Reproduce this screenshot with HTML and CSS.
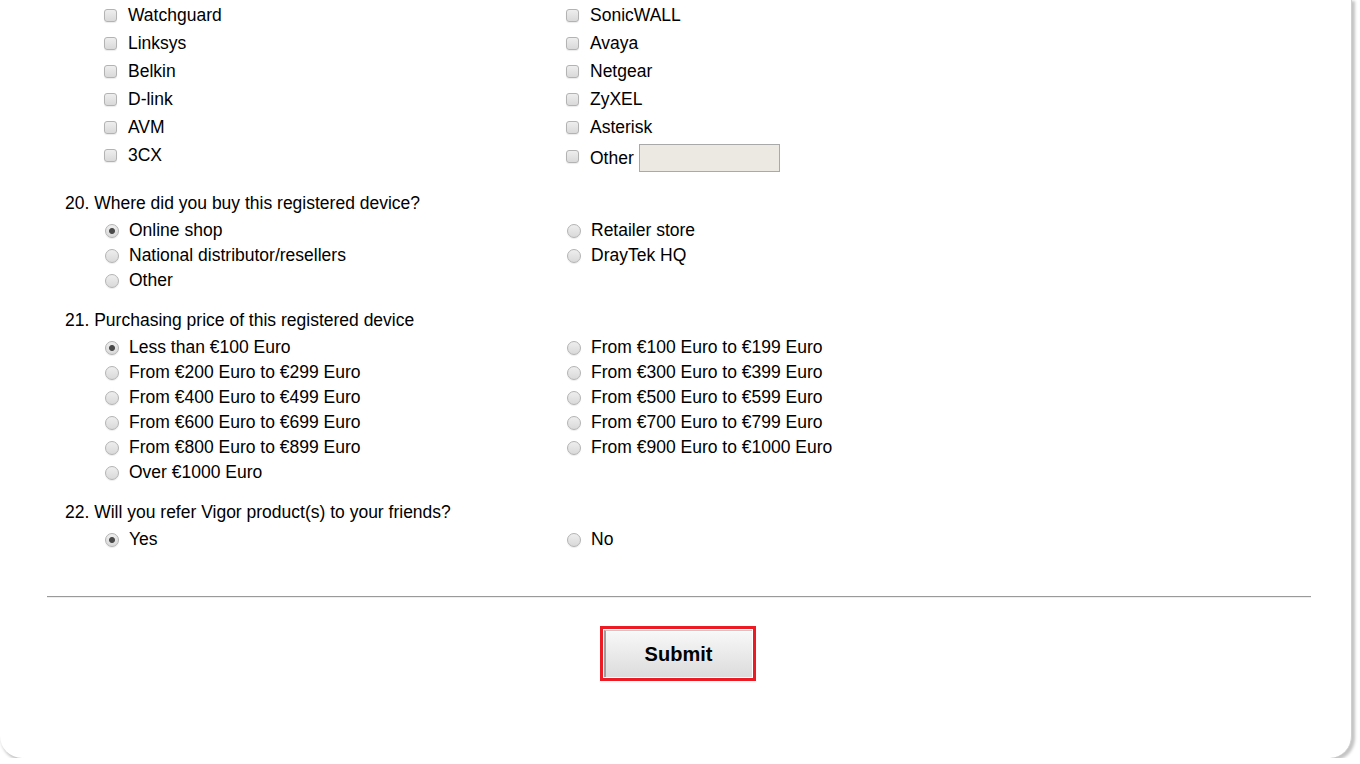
FILE: index.html
```html
<!DOCTYPE html>
<html lang="en">
<head>
    <meta charset="UTF-8">
    <meta name="viewport" content="width=device-width, initial-scale=1.0">
    <title>Product Registration Survey</title>
    <link rel="stylesheet" href="styles.css">
</head>
<body>
    <div class="page">
        <form class="survey" onsubmit="return false">
            <div class="opts checks">
                <label class="opt"><input type="checkbox">Watchguard</label>
                <label class="opt"><input type="checkbox">SonicWALL</label>
                <label class="opt"><input type="checkbox">Linksys</label>
                <label class="opt"><input type="checkbox">Avaya</label>
                <label class="opt"><input type="checkbox">Belkin</label>
                <label class="opt"><input type="checkbox">Netgear</label>
                <label class="opt"><input type="checkbox">D-link</label>
                <label class="opt"><input type="checkbox">ZyXEL</label>
                <label class="opt"><input type="checkbox">AVM</label>
                <label class="opt"><input type="checkbox">Asterisk</label>
                <label class="opt"><input type="checkbox">3CX</label>
                <label class="opt other"><input type="checkbox">Other <input type="text" class="other-text"></label>
            </div>

            <div class="question">
                <p class="q-title">20. Where did you buy this registered device?</p>
                <div class="opts radios">
                    <label class="opt"><input type="radio" name="q20" checked>Online shop</label>
                    <label class="opt"><input type="radio" name="q20">Retailer store</label>
                    <label class="opt"><input type="radio" name="q20">National distributor/resellers</label>
                    <label class="opt"><input type="radio" name="q20">DrayTek HQ</label>
                    <label class="opt"><input type="radio" name="q20">Other</label>
                </div>
            </div>

            <div class="question">
                <p class="q-title">21. Purchasing price of this registered device</p>
                <div class="opts radios">
                    <label class="opt"><input type="radio" name="q21" checked>Less than €100 Euro</label>
                    <label class="opt"><input type="radio" name="q21">From €100 Euro to €199 Euro</label>
                    <label class="opt"><input type="radio" name="q21">From €200 Euro to €299 Euro</label>
                    <label class="opt"><input type="radio" name="q21">From €300 Euro to €399 Euro</label>
                    <label class="opt"><input type="radio" name="q21">From €400 Euro to €499 Euro</label>
                    <label class="opt"><input type="radio" name="q21">From €500 Euro to €599 Euro</label>
                    <label class="opt"><input type="radio" name="q21">From €600 Euro to €699 Euro</label>
                    <label class="opt"><input type="radio" name="q21">From €700 Euro to €799 Euro</label>
                    <label class="opt"><input type="radio" name="q21">From €800 Euro to €899 Euro</label>
                    <label class="opt"><input type="radio" name="q21">From €900 Euro to €1000 Euro</label>
                    <label class="opt"><input type="radio" name="q21">Over €1000 Euro</label>
                </div>
            </div>

            <div class="question">
                <p class="q-title">22. Will you refer Vigor product(s) to your friends?</p>
                <div class="opts radios">
                    <label class="opt"><input type="radio" name="q22" checked>Yes</label>
                    <label class="opt"><input type="radio" name="q22">No</label>
                </div>
            </div>
        </form>

        <hr class="divider">

        <div class="actions">
            <div class="submit-box">
                <button type="button" class="submit">Submit</button>
            </div>
        </div>
    </div>
</body>
</html>
```

FILE: styles.css
```css
body {
    margin: 0;
    background-color: #fff;
    font-family: "Liberation Sans", Arial, sans-serif;
    font-size: 17.5px;
    color: #000;
    overflow: hidden;
}
.page {
    width: 1352px;
    background-color: #fff;
    border-right: 1px solid #cfcfcf;
    border-radius: 0 0 22px 22px;
    box-shadow: 2px 2px 3px 1px #c4c4c4;
    box-sizing: border-box;
}
.survey {
    padding: 1px 0 0 65px;
}
.opts {
    display: grid;
    grid-template-columns: 462px 1fr;
    margin-left: 39px;
}
.opt {
    display: flex;
    align-items: center;
    white-space: nowrap;
}
.checks {
    margin-bottom: 16px;
}
.checks .opt {
    height: 28px;
}
.checks .opt.other {
    height: 34px;
}
.checks .opt.other input[type="checkbox"] {
    margin-top: -3px;
}
.radios .opt {
    height: 25px;
}
.question {
    margin-bottom: 15px;
}
.q-title {
    margin: 0 0 2px 0;
    line-height: 25px;
}

/* old style grey form controls */
input[type="checkbox"],
input[type="radio"] {
    -webkit-appearance: none;
    appearance: none;
    margin: 0;
    background: linear-gradient(#eeeeee, #d9d9d9);
    border: 1px solid #b3b3b3;
    box-shadow: 0 1px 1px rgba(0, 0, 0, 0.08);
    box-sizing: border-box;
}
input[type="checkbox"] {
    width: 13px;
    height: 13px;
    border-radius: 3px;
    margin-right: 11px;
}
input[type="radio"] {
    width: 14px;
    height: 14px;
    border-radius: 50%;
    margin: 1px 10px 0 1px;
}
input[type="radio"]:checked {
    background: radial-gradient(circle, #4a4a4a 0, #4a4a4a 2.5px, transparent 3.5px), linear-gradient(#eeeeee, #d9d9d9);
}
.other-text {
    width: 141px;
    height: 28px;
    margin-left: 5px;
    border: 1px solid #a9a9a9;
    background-color: #ebe9e2;
    box-sizing: border-box;
    font-size: 15px;
}

.divider {
    margin: 44px 40px 0 47px;
    border: 0;
    border-top: 1px solid #9a9a9a;
    border-bottom: 1px solid #eeeeee;
}
.actions {
    display: flex;
    justify-content: center;
    padding: 28px 0 77px 4px;
}
.submit-box {
    border: 3px solid #ed1c24;
    padding: 1px;
    background-color: #fff;
}
.submit {
    display: block;
    width: 148px;
    height: 47px;
    border: 0;
    border-left: 2px solid #9d9d9d;
    border-top: 1px solid #c8c8c8;
    background: linear-gradient(#f8f8f8, #dcdcdc);
    font-family: "Liberation Sans", Arial, sans-serif;
    font-size: 20px;
    font-weight: bold;
    color: #000;
    cursor: pointer;
}
```
